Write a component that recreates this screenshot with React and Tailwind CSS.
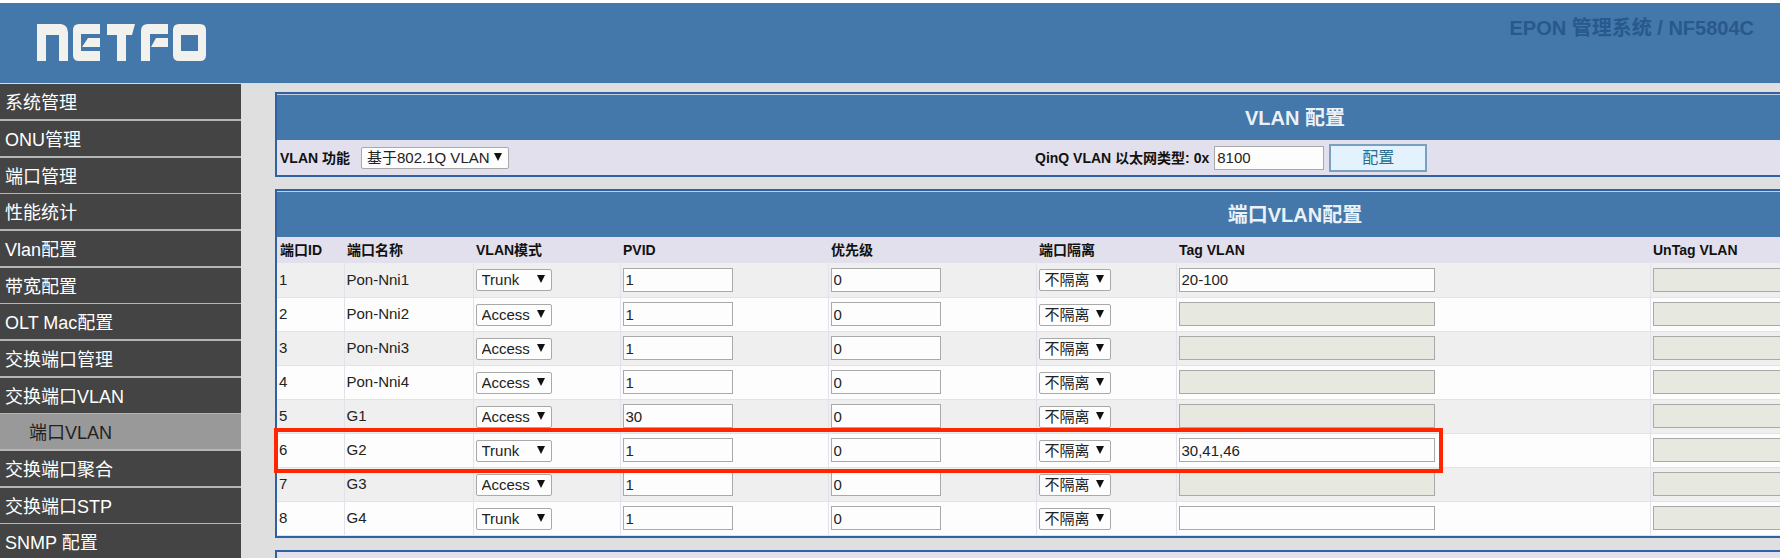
import React, { useState } from "react";

const menuItems = [
  { label: "系统管理" },
  { label: "ONU管理" },
  { label: "端口管理" },
  { label: "性能统计" },
  { label: "Vlan配置" },
  { label: "带宽配置" },
  { label: "OLT Mac配置" },
  { label: "交换端口管理" },
  { label: "交换端口VLAN" },
  { label: "端口VLAN", sub: true },
  { label: "交换端口聚合" },
  { label: "交换端口STP" },
  { label: "SNMP 配置" },
];

const initialPorts = [
  { id: 1, name: "Pon-Nni1", mode: "Trunk", pvid: "1", priority: "0", tag: "20-100" },
  { id: 2, name: "Pon-Nni2", mode: "Access", pvid: "1", priority: "0", tag: "" },
  { id: 3, name: "Pon-Nni3", mode: "Access", pvid: "1", priority: "0", tag: "" },
  { id: 4, name: "Pon-Nni4", mode: "Access", pvid: "1", priority: "0", tag: "" },
  { id: 5, name: "G1", mode: "Access", pvid: "30", priority: "0", tag: "" },
  { id: 6, name: "G2", mode: "Trunk", pvid: "1", priority: "0", tag: "30,41,46", marked: true },
  { id: 7, name: "G3", mode: "Access", pvid: "1", priority: "0", tag: "" },
  { id: 8, name: "G4", mode: "Trunk", pvid: "1", priority: "0", tag: "" },
];

const Logo = () => (
  <svg className="w-[170px] h-[38px]" viewBox="0 0 170 38" fill="#f1f2ee" fillRule="evenodd" role="img" aria-label="NETFO">
    <path d="M0 0H24Q31 1 31 9V37H22V11H9V37H0Z" />
    <path d="M42 0H63V10H44V27H63V37H42Q36 37 36 31V6Q36 0 42 0Z" />
    <path d="M51 14H63V23H45Z" />
    <path d="M70 0H98L95 11H89V37H80V11H70Z" />
    <path d="M111 0H131V10H113V37H104V7Q104 0 111 0Z" />
    <path d="M119 14H131V23H114Z" />
    <path d="M142 0H163Q169 0 169 6V31Q169 37 163 37H142Q136 37 136 31V6Q136 0 142 0ZM144 11V27H161V11Z" />
  </svg>
);

const SelectBox = ({ label, id, value, options, onChange, width }) => (
  <span className={`relative inline-block align-middle ${width}`}>
    <select
      id={id}
      aria-label={label}
      value={value}
      onChange={(e) => onChange(e.target.value)}
      className="block w-full h-[22px] pl-[5px] appearance-none rounded-xs border border-[#a9a9a9] bg-[#fdfdfd] text-[15px] leading-5 text-[#222]"
    >
      {options.map((o) => (
        <option key={o}>{o}</option>
      ))}
    </select>
    <svg className="absolute right-[7px] top-[6px] w-2 h-2 pointer-events-none" viewBox="0 0 8 8">
      <path d="M0 0H8L4 8Z" fill="#111" />
    </svg>
  </span>
);

const TextBox = ({ label, id, value, onChange, disabled, width }) => (
  <input
    type="text"
    id={id}
    aria-label={label}
    value={value}
    disabled={disabled}
    onChange={(e) => onChange(e.target.value)}
    className={`block h-6 px-0.5 border border-[#a9a9a9] bg-[#fdfdfd] disabled:bg-[#e7e8e0] text-[15px] text-[#222] ${width}`}
  />
);

const PanelTitle = ({ children }) => (
  <h2 className="h-[46px] flex items-center justify-center border-t border-[#c3d0e2] bg-[#4477aa] text-xl font-bold text-[#eaf1f7]">
    {children}
  </h2>
);

const App = () => {

  const [vlanType, setVlanType] = useState("基于802.1Q VLAN")
  const [etherType, setEtherType] = useState("8100")
  const [ports, setPorts] = useState(initialPorts)

  const updatePort = (id, key, value) => {
    setPorts(ports.map((p) => (p.id === id ? { ...p, [key]: value } : p)))
  }

  return (
    <div className="h-screen overflow-hidden flex flex-col bg-[#dfdfdf] font-['Liberation_Sans','Noto_Sans_CJK_SC',sans-serif] text-[15px] text-[#222]">
      <header className="flex items-start justify-between shrink-0 h-[84px] border-t-3 border-b border-t-white border-b-[#d5dbe2] bg-[#4477aa] pl-[37px] pr-[26px]">
        <div className="pt-[21px]">
          <Logo />
        </div>
        <h1 className="pt-[11px] text-xl font-bold text-[#28598d]">EPON 管理系统 / NF5804C</h1>
      </header>

      <div className="flex flex-1 min-h-0">
        <nav className="w-[241px] shrink-0 overflow-hidden bg-[#444]">
          <ul>
            {menuItems.map((item) => (
              <li key={item.label} className="border-b-2 nth-[3n]:border-b border-[#b5b5b5]">
                <a
                  href="#"
                  className={`flex items-center h-[35px] pt-0.5 text-lg ${item.sub ? "pl-[29px] bg-[#999] text-[#222]" : "pl-[5px] text-white"}`}
                >
                  {item.label}
                </a>
              </li>
            ))}
          </ul>
        </nav>

        <main className="flex-1 min-w-0 overflow-hidden pl-[34px] pt-2">
          <div className="min-w-[2040px] flex flex-col gap-3">
            {/* Global VLAN settings */}
            <section className="border-2 border-[#2f62a5] bg-[#e2e0ec]">
              <PanelTitle>VLAN 配置</PanelTitle>
              <form className="flex items-center h-[35px] pl-[3px] text-sm font-bold text-[#111]" onSubmit={(e) => e.preventDefault()}>
                <div className="flex items-center gap-[11px] w-[755px]">
                  <label htmlFor="vlan-type">VLAN 功能</label>
                  <SelectBox
                    id="vlan-type"
                    value={vlanType}
                    options={["基于802.1Q VLAN", "基于端口 VLAN"]}
                    onChange={setVlanType}
                    width="w-[148px] font-normal"
                  />
                </div>
                <div className="flex items-center gap-[5px]">
                  <label htmlFor="ether-type">QinQ VLAN 以太网类型: 0x</label>
                  <TextBox id="ether-type" value={etherType} onChange={setEtherType} width="w-[110px] font-normal" />
                  <button type="submit" className="w-[98px] h-7 border-2 border-[#7b9fc0] bg-[#e3f2fd] text-base leading-5 font-normal text-[#2b6c8c]">
                    配置
                  </button>
                </div>
              </form>
            </section>

            {/* Per port VLAN settings */}
            <section className="border-2 border-[#2f62a5] bg-[#e2e0ec]">
              <PanelTitle>端口VLAN配置</PanelTitle>
              <table className="w-full table-fixed text-left">
                <thead>
                  <tr className="h-[26px] text-sm text-[#111] [&>th]:pl-[3px] [&>th]:py-0">
                    <th className="w-[67px]">端口ID</th>
                    <th className="w-[129px]">端口名称</th>
                    <th className="w-[147px]">VLAN模式</th>
                    <th className="w-[208px]">PVID</th>
                    <th className="w-[208px]">优先级</th>
                    <th className="w-[140px]">端口隔离</th>
                    <th className="w-[474px]">Tag VLAN</th>
                    <th>UnTag VLAN</th>
                  </tr>
                </thead>
                <tbody>
                  {ports.map((port) => (
                    <tr
                      key={port.id}
                      className="h-[34px] odd:bg-[#efefef] even:bg-[#fdfdfd] border-b border-[#e2e2ea] [&>td]:border-r [&>td]:border-[#e2e2ea] [&>td]:pl-0.5 [&>td]:py-0"
                    >
                      <td className="relative">
                        {port.id}
                        {port.marked && (
                          <span className="absolute -left-[3px] -top-[6px] w-[1169px] h-[45px] border-4 border-[#ff2600] pointer-events-none" />
                        )}
                      </td>
                      <td>{port.name}</td>
                      <td>
                        <SelectBox
                          label={`${port.name} VLAN模式`}
                          value={port.mode}
                          options={["Access", "Trunk", "Hybrid"]}
                          onChange={(v) => updatePort(port.id, "mode", v)}
                          width="w-[76px]"
                        />
                      </td>
                      <td>
                        <TextBox label={`${port.name} PVID`} value={port.pvid} onChange={(v) => updatePort(port.id, "pvid", v)} width="w-[110px]" />
                      </td>
                      <td>
                        <TextBox label={`${port.name} 优先级`} value={port.priority} onChange={(v) => updatePort(port.id, "priority", v)} width="w-[110px]" />
                      </td>
                      <td>
                        <SelectBox
                          label={`${port.name} 端口隔离`}
                          value={port.isolate || "不隔离"}
                          options={["不隔离", "隔离"]}
                          onChange={(v) => updatePort(port.id, "isolate", v)}
                          width="w-[72px]"
                        />
                      </td>
                      <td>
                        <TextBox
                          label={`${port.name} Tag VLAN`}
                          value={port.tag}
                          disabled={port.mode === "Access"}
                          onChange={(v) => updatePort(port.id, "tag", v)}
                          width="w-[256px]"
                        />
                      </td>
                      <td>
                        <TextBox label={`${port.name} UnTag VLAN`} value="" disabled onChange={() => {}} width="w-[256px]" />
                      </td>
                    </tr>
                  ))}
                </tbody>
              </table>
            </section>

            <section className="h-10 border-2 border-[#2f62a5] bg-[#e2e0ec]" />
          </div>
        </main>
      </div>
    </div>
  );
};

export default App;
